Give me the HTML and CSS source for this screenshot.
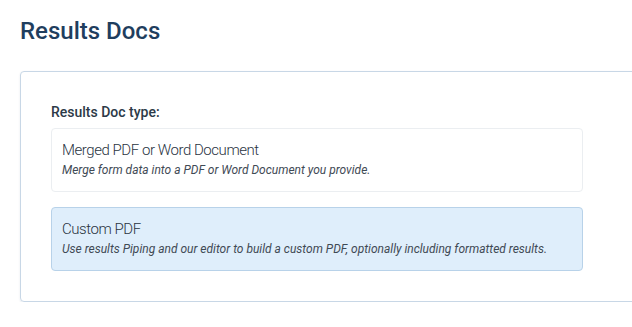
FILE: index.html
```html
<!DOCTYPE html>
<html>
<head>
<meta charset="utf-8">
<link rel="stylesheet" href="styles.css">
</head>
<body>
<div class="page">
  <h1 class="title">Results Docs</h1>
  <section class="card">
    <div class="label">Results Doc type:</div>
    <div class="option">
      <div class="opt-title">Merged PDF or Word Document</div>
      <div class="opt-desc">Merge form data into a PDF or Word Document you provide.</div>
    </div>
    <div class="option selected">
      <div class="opt-title">Custom PDF</div>
      <div class="opt-desc">Use results Piping and our editor to build a custom PDF, optionally including formatted results.</div>
    </div>
  </section>
</div>
</body>
</html>
```
FILE: styles.css
```css
html, body {
  margin: 0;
  padding: 0;
  background: #fff;
  overflow: hidden;
}
body {
  font-family: Roboto, "Liberation Sans", sans-serif;
}
.page {
  padding: 15px 0 0 20px;
}
.title {
  margin: 0;
  font-size: 24px;
  line-height: 32px;
  font-weight: 500;
  color: #1f3e5e;
}
.card {
  margin-top: 24px;
  width: 660px;
  box-sizing: border-box;
  border: 1px solid #c8d7e6;
  border-radius: 4px;
  box-shadow: 0 1px 2px rgba(80, 110, 140, 0.15);
  padding: 30px 30px 30px 30px;
}
.label {
  font-size: 14px;
  line-height: 20px;
  font-weight: 500;
  color: #2c3a48;
  margin-bottom: 6px;
}
.option {
  width: 532px;
  box-sizing: border-box;
  border: 1px solid #ebeef1;
  border-radius: 4px;
  padding: 10px 10px 12px 10px;
}
.option + .option {
  margin-top: 15px;
}
.option.selected {
  background: #dfeefb;
  border-color: #b8d2e9;
}
.opt-title {
  font-size: 15px;
  line-height: 22px;
  font-weight: 300;
  letter-spacing: -0.45px;
  color: #2a343f;
}
.opt-desc {
  font-size: 12px;
  line-height: 18px;
  font-style: italic;
  color: #3f4a55;
}
```
